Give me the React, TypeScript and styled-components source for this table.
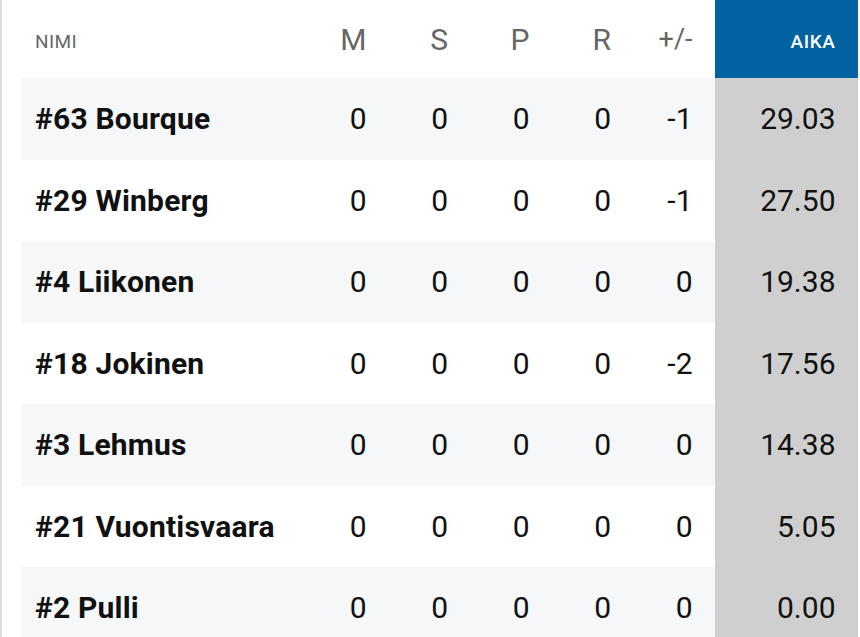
import styled, { createGlobalStyle } from "styled-components";

const GlobalStyle = createGlobalStyle`
  body {
    margin: 0;
    background: #ffffff;
    font-family: Roboto, "Liberation Sans", sans-serif;
  }
`;

type Player = {
  name: string;
  m: number;
  s: number;
  p: number;
  r: number;
  pm: number;
  time: string;
};

const players: Player[] = [
  { name: "#63 Bourque", m: 0, s: 0, p: 0, r: 0, pm: -1, time: "29.03" },
  { name: "#29 Winberg", m: 0, s: 0, p: 0, r: 0, pm: -1, time: "27.50" },
  { name: "#4 Liikonen", m: 0, s: 0, p: 0, r: 0, pm: 0, time: "19.38" },
  { name: "#18 Jokinen", m: 0, s: 0, p: 0, r: 0, pm: -2, time: "17.56" },
  { name: "#3 Lehmus", m: 0, s: 0, p: 0, r: 0, pm: 0, time: "14.38" },
  { name: "#21 Vuontisvaara", m: 0, s: 0, p: 0, r: 0, pm: 0, time: "5.05" },
  { name: "#2 Pulli", m: 0, s: 0, p: 0, r: 0, pm: 0, time: "0.00" },
];

// Sivun runko, vasemmassa reunassa ohut harmaa viiva
const Page = styled.div`
  width: 860px;
  height: 637px;
  overflow: hidden;
  box-sizing: border-box;
  border-left: 2px solid #dedede;
  padding: 0 2px 0 19px;
`;

const Row = styled.div<{ $striped?: boolean; $header?: boolean }>`
  display: grid;
  grid-template-columns: 286px repeat(5, 81.5px) 143px;
  height: ${(p) => (p.$header ? "78px" : "81.5px")};
  background: ${(p) => (p.$striped ? "#f6f7f9" : "#ffffff")};
`;

const NameHead = styled.div`
  display: flex;
  align-items: center;
  padding-left: 14px;
  padding-top: 4px;
  font-size: 19px;
  color: #666666;
  letter-spacing: 0.4px;
`;

const StatHead = styled.div<{ $small?: boolean }>`
  display: flex;
  align-items: center;
  justify-content: flex-end;
  padding-right: 22px;
  font-size: ${(p) => (p.$small ? "27px" : "30px")};
  color: #666666;
`;

const TimeHead = styled.div`
  display: flex;
  align-items: center;
  justify-content: flex-end;
  padding-right: 22px;
  padding-top: 4px;
  background: #0062a0;
  color: #ffffff;
  font-size: 19px;
  font-weight: 500;
  letter-spacing: 0.6px;
`;

const NameCell = styled.div`
  display: flex;
  align-items: center;
  padding-left: 14px;
  font-size: 30px;
  font-weight: 700;
  color: #111111;
  letter-spacing: 0.2px;
`;

const StatCell = styled.div`
  display: flex;
  align-items: center;
  justify-content: flex-end;
  padding-right: 22px;
  font-size: 30px;
  color: #111111;
`;

const TimeCell = styled(StatCell)`
  background: #cfcfcf;
`;

export default function App() {
  return (
    <>
      <GlobalStyle />
      <Page>
        <Row $header>
          <NameHead>NIMI</NameHead>
          <StatHead>M</StatHead>
          <StatHead>S</StatHead>
          <StatHead>P</StatHead>
          <StatHead>R</StatHead>
          <StatHead $small>+/-</StatHead>
          <TimeHead>AIKA</TimeHead>
        </Row>
        {players.map((pl, i) => (
          <Row key={pl.name} $striped={i % 2 === 0}>
            <NameCell>{pl.name}</NameCell>
            <StatCell>{pl.m}</StatCell>
            <StatCell>{pl.s}</StatCell>
            <StatCell>{pl.p}</StatCell>
            <StatCell>{pl.r}</StatCell>
            <StatCell>{pl.pm}</StatCell>
            <TimeCell>{pl.time}</TimeCell>
          </Row>
        ))}
      </Page>
    </>
  );
}
